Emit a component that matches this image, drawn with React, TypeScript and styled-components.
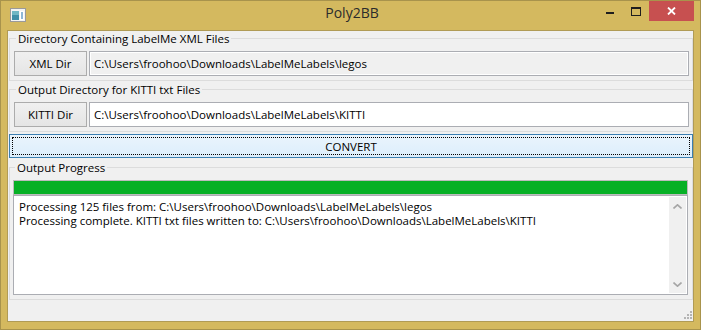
import React from 'react';
import styled, { createGlobalStyle } from 'styled-components';

const GlobalStyle = createGlobalStyle`
  html, body {
    margin: 0;
    padding: 0;
    width: 701px;
    height: 330px;
    overflow: hidden;
    background: #ffffff;
  }
  * { box-sizing: border-box; }
`;

const FONT = `'Open Sans', 'Noto Sans', sans-serif`;

const Window = styled.div`
  width: 701px;
  height: 330px;
  display: flex;
  flex-direction: column;
  background: #d4b95f;
  border: 1px solid #a8934c;
  padding: 0 6px 7px 6px;
  font-family: ${FONT};
  font-size: 11.5px;
  color: #000;
`;

const TitleBar = styled.div`
  height: 29px;
  display: grid;
  grid-template-columns: 1fr auto 1fr;
  align-items: start;
  margin: 0 -6px;
  padding: 0 6px 0 9px;
`;

const AppIcon = styled.svg`
  margin-top: 7px;
`;

const Title = styled.div`
  font-size: 14px;
  line-height: 24px;
  color: #2b2b2b;
`;

const CaptionButtons = styled.div`
  display: flex;
  justify-content: flex-end;
`;

const CaptionButton = styled.div<{ $w: number; $close?: boolean }>`
  width: ${(p) => p.$w}px;
  height: 20px;
  display: flex;
  align-items: center;
  justify-content: center;
  background: ${(p) => (p.$close ? '#c75050' : 'transparent')};
`;

const Client = styled.div`
  flex: 1;
  display: flex;
  flex-direction: column;
  background: #f0f0f0;
  border: 1px solid #b09b55;
  padding: 0 0 0 1px;
`;

const Group = styled.fieldset<{ $pl?: number; $pr?: number; $mt?: number }>`
  margin: ${(p) => p.$mt ?? 0}px 0 0 0;
  min-width: 0;
  border: 1px solid #dcdcdc;
  padding: 5px ${(p) => p.$pr ?? 3}px 4px ${(p) => p.$pl ?? 4}px;
`;

const Legend = styled.legend`
  padding: 0 2px;
  margin-left: 2px;
  line-height: 15px;
  font-size: 11.5px;
`;

const Row = styled.div`
  display: flex;
  gap: 2px;
`;

const PushButton = styled.div`
  width: 73px;
  height: 25px;
  display: flex;
  align-items: center;
  justify-content: center;
  border: 1px solid #acacac;
  background: linear-gradient(#f0f0f0, #e5e5e5);
`;

const Field = styled.div<{ $readOnly?: boolean }>`
  flex: 1;
  height: 25px;
  display: flex;
  align-items: center;
  padding: 0 4px;
  border: 1px solid #abadb3;
  box-shadow: inset 0 0 0 1px #ffffff;
  background: ${(p) => (p.$readOnly ? '#f0f0f0' : '#ffffff')};
  white-space: nowrap;
`;

const ConvertButton = styled.div`
  margin-top: 2px;
  height: 24px;
  padding: 2px;
  border: 1px solid #3c7fb1;
  background: linear-gradient(#eaf4fc, #dceefc);
`;

const FocusRect = styled.div`
  height: 100%;
  border: 1px dotted #000;
  display: flex;
  align-items: center;
  justify-content: center;
`;

const Progress = styled.div`
  height: 15px;
  border: 1px solid #bcbcbc;
  background: #e6e6e6;
`;

const ProgressFill = styled.div`
  height: 100%;
  background: #06b025;
`;

const LogBox = styled.div`
  height: 100px;
  display: flex;
  border: 1px solid #abadb3;
  background: #ffffff;
  padding: 1px;
`;

const LogText = styled.div`
  flex: 1;
  padding: 3px 4px;
  line-height: 14px;
  white-space: pre;
`;

const ScrollBar = styled.div`
  width: 17px;
  display: flex;
  flex-direction: column;
  justify-content: space-between;
  align-items: center;
  background: #f0f0f0;
  padding: 7px 0 6px;
`;

const StatusBar = styled.div`
  flex: 1;
  display: flex;
  justify-content: flex-end;
  align-items: flex-end;
  padding: 0 0 1px 0;
`;

const xmlPath = 'C:\\Users\\froohoo\\Downloads\\LabelMeLabels\\legos';
const kittiPath = 'C:\\Users\\froohoo\\Downloads\\LabelMeLabels\\KITTI';

export default function App(): JSX.Element {
  return (
    <>
      <GlobalStyle />
      <Window>
        <TitleBar>
          <AppIcon width="16" height="14" viewBox="0 0 16 14">
            <rect x="0.5" y="0.5" width="15" height="13" fill="#f4f4f4" stroke="#9a9a9a" />
            <rect x="2" y="3" width="7" height="9" fill="#3f8fa8" />
            <rect x="2" y="3" width="7" height="4" fill="#6fb7c4" />
            <rect x="10" y="3" width="4" height="9" fill="#ffffff" />
            <rect x="11" y="4" width="2" height="7" fill="#8fb8d8" />
          </AppIcon>
          <Title>Poly2BB</Title>
          <CaptionButtons>
            <CaptionButton $w={26}>
              <svg width="8" height="8" viewBox="0 0 8 8">
                <rect x="0" y="5" width="8" height="2" fill="#1e1e1e" />
              </svg>
            </CaptionButton>
            <CaptionButton $w={26}>
              <svg width="10" height="9" viewBox="0 0 10 9">
                <rect x="0.5" y="1" width="9" height="7.5" fill="none" stroke="#1e1e1e" />
                <rect x="0" y="0" width="10" height="2" fill="#1e1e1e" />
              </svg>
            </CaptionButton>
            <CaptionButton $w={45} $close>
              <svg width="9" height="8" viewBox="0 0 9 8">
                <path d="M1 0.5 L8 7.5 M8 0.5 L1 7.5" stroke="#ffffff" strokeWidth="1.8" />
              </svg>
            </CaptionButton>
          </CaptionButtons>
        </TitleBar>

        <Client>
          <Group>
            <Legend>Directory Containing LabelMe XML Files</Legend>
            <Row>
              <PushButton>XML Dir</PushButton>
              <Field $readOnly>{xmlPath}</Field>
            </Row>
          </Group>

          <Group $mt={1}>
            <Legend>Output Directory for KITTI txt Files</Legend>
            <Row>
              <PushButton>KITTI Dir</PushButton>
              <Field>{kittiPath}</Field>
            </Row>
          </Group>

          <ConvertButton>
            <FocusRect>CONVERT</FocusRect>
          </ConvertButton>

          <Group $mt={2} $pl={3} $pr={4}>
            <Legend>Output Progress</Legend>
            <Progress>
              <ProgressFill style={{ width: '100%' }} />
            </Progress>
            <LogBox>
              <LogText>
                {`Processing 125 files from: ${xmlPath}\nProcessing complete. KITTI txt files written to: ${kittiPath}`}
              </LogText>
              <ScrollBar>
                <svg width="9" height="5" viewBox="0 0 9 5">
                  <path d="M0.5 4.5 L4.5 0.8 L8.5 4.5" fill="none" stroke="#a6a6a6" strokeWidth="1.6" />
                </svg>
                <svg width="9" height="5" viewBox="0 0 9 5">
                  <path d="M0.5 0.5 L4.5 4.2 L8.5 0.5" fill="none" stroke="#a6a6a6" strokeWidth="1.6" />
                </svg>
              </ScrollBar>
            </LogBox>
          </Group>

          <StatusBar>
            <svg width="10" height="10" viewBox="0 0 10 10">
              <g fill="#b4b4b4">
                <rect x="7" y="1" width="2" height="2" />
                <rect x="4" y="4" width="2" height="2" />
                <rect x="7" y="4" width="2" height="2" />
                <rect x="1" y="7" width="2" height="2" />
                <rect x="4" y="7" width="2" height="2" />
                <rect x="7" y="7" width="2" height="2" />
              </g>
            </svg>
          </StatusBar>
        </Client>
      </Window>
    </>
  );
}
